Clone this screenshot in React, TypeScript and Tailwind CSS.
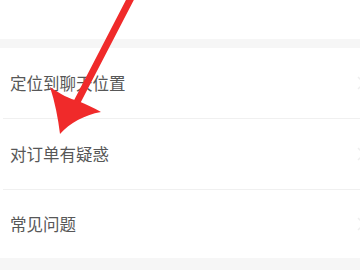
import React from "react";

const ROWS = ["定位到聊天位置", "对订单有疑惑", "常见问题"];

function Chevron() {
  return (
    <svg width="8" height="14" viewBox="0 0 8 14" className="mr-[-5px] shrink-0">
      <path d="M1 1l6 6-6 6" fill="none" stroke="#eeeeee" strokeWidth="1.5" />
    </svg>
  );
}

function Arrow() {
  return (
    <svg
      className="absolute inset-0 pointer-events-none"
      width="360"
      height="270"
      viewBox="0 0 360 270"
    >
      <line x1="133" y1="-6" x2="76" y2="104" stroke="#f02a2a" strokeWidth="7" strokeLinecap="round" />
      <path
        d="M60 134 C58 118 55 102 50 87 C60 94 70 99 78 101 C86 104 94 108 101 112 C84 115 70 123 60 134 Z"
        fill="#f02a2a"
      />
    </svg>
  );
}

export default function App() {
  return (
    <div className="relative w-[360px] h-[270px] overflow-hidden bg-white font-['Noto_Sans_CJK_SC','Noto_Sans',sans-serif]">
      <div className="h-[39px] bg-white" />
      <div className="h-[9px] bg-[#f6f6f6]" />
      <div className="bg-white">
        {ROWS.map((label, i) => (
          <div key={label}>
            <div className={`flex items-center justify-between pl-[10px] ${i === 2 ? "h-[68px]" : "h-[70px]"}`}>
              <span className="text-[16.5px] leading-none text-[#575757]">{label}</span>
              <Chevron />
            </div>
            {i < 2 && <div className="ml-[3px] h-px bg-[#f0f0f0]" />}
          </div>
        ))}
      </div>
      <div className="h-[20px] bg-[#f6f6f6]" />
      <Arrow />
    </div>
  );
}
